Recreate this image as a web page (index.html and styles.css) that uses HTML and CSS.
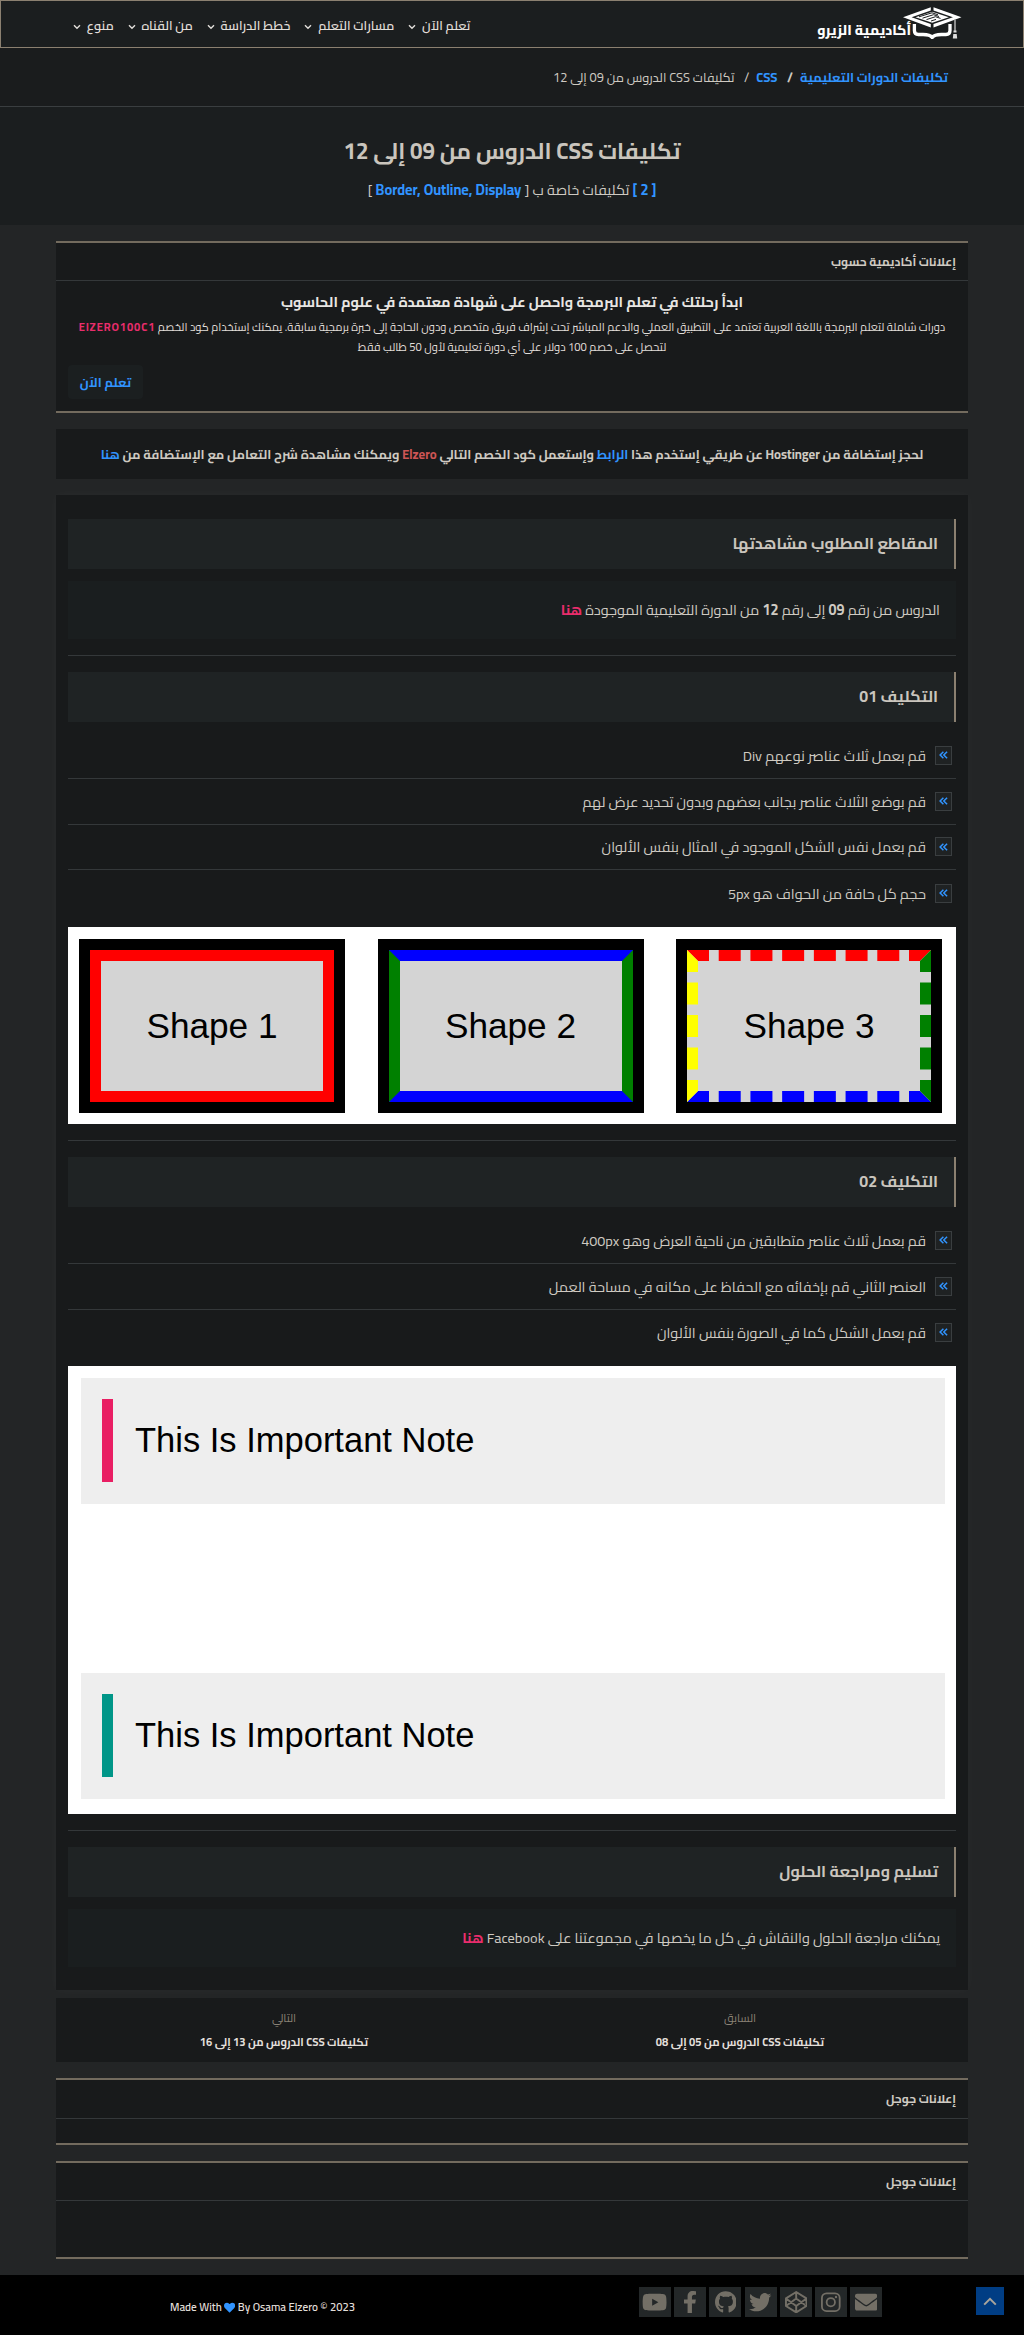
FILE: index.html
```
<!DOCTYPE html>
<html lang="ar" dir="rtl">
<head>
<meta charset="utf-8">
<title>تكليفات CSS الدروس من 09 إلى 12</title>
<link rel="stylesheet" href="styles.css">
</head>
<body>
<svg class="defs" width="0" height="0" aria-hidden="true">
  <symbol id="down" viewBox="0 0 8 6"><path d="M1 1.2l3 3 3-3" fill="none" stroke="currentColor" stroke-width="1.4"/></symbol>
  <symbol id="dbl" viewBox="0 0 9 8"><path d="M4.4.7L1.1 4l3.3 3.300M8.100.7L4.800 4l3.300 3.300" fill="none" stroke="currentColor" stroke-width="1.500"/></symbol>
</svg>
<header class="header">
  <a class="logo">
    <svg class="cap" viewBox="0 0 59 32">
      <path d="M0 10.200L27.800.300v3.200L8.600 10.200l19.200 6.900v3.400zM58.500 10.200L30.500.300v3.200l19.400 6.700-19.400 6.900v3.400z" fill="#fff"/>
      <path d="M12.500 10.200L29.200 4.700l16.700 5.500-16.700 5.600z" fill="#fff"/>
      <path d="M16 9.800l13-4 6 2M19.500 11.200l11-3.500 5.500 1.800M23.500 12.600l9-2.900 5 1.700M28 14l5-1.600" fill="none" stroke="#1b1e1f" stroke-width="1"/>
      <path d="M11.400 17v6.500q0 4 4 4h4.600q7 0 9.200 3 2.200-3 9.200-3h4.600q4 0 4-4V17" fill="none" stroke="#fff" stroke-width="3.300"/>
      <path d="M52 12.500V24" stroke="#aaa" stroke-width="1.600"/>
      <path d="M50.500 23.500h3v2h-3zM50.300 27h3.400l.5 4.500h-4.400z" fill="#ddd"/>
    </svg>
    <span class="logo-text">أكاديمية الزيرو</span>
  </a>
  <nav class="nav">
    <a>تعلم الآن<svg><use href="#down"/></svg></a>
    <a>مسارات التعلم<svg><use href="#down"/></svg></a>
    <a>خطط الدراسة<svg><use href="#down"/></svg></a>
    <a>من القناه<svg><use href="#down"/></svg></a>
    <a>منوع<svg><use href="#down"/></svg></a>
  </nav>
</header>
<div class="crumbs"><b><a>تكليفات الدورات التعليمية</a></b><b class="sep">/</b><b><a>CSS</a></b><span class="sep">/</span><span>تكليفات CSS الدروس من 09 إلى 12</span></div>
<section class="hero">
  <h1>تكليفات CSS الدروس من 09 إلى 12</h1>
  <p><b>[ 2 ]</b> تكليفات خاصة ب [ <b>Border, Outline, Display</b> ]</p>
</section>
<main class="container">
  <section class="ad">
    <div class="ad-head">إعلانات أكاديمية حسوب</div>
    <div class="ad-body">
      <h3>ابدأ رحلتك في تعلم البرمجة واحصل على شهادة معتمدة في علوم الحاسوب</h3>
      <p>دورات شاملة لتعلم البرمجة باللغة العربية تعتمد على التطبيق العملي والدعم المباشر تحت إشراف فريق متخصص ودون الحاجة إلى خبرة برمجية سابقة. يمكنك إستخدام كود الخصم <b class="code">ElZERO100C1</b><br>لتحصل على خصم 100 دولار على أي دورة تعليمية لأول 50 طالب فقط</p>
      <a class="btn">تعلم الآن</a>
    </div>
  </section>
  <section class="notice">لحجز إستضافة من Hostinger عن طريقي إستخدم هذا <a>الرابط</a> وإستعمل كود الخصم التالي <span>Elzero</span> ويمكنك مشاهدة شرح التعامل مع الإستضافة من <a>هنا</a></section>
  <article class="card">
    <h2>المقاطع المطلوب مشاهدتها</h2>
    <p class="para">الدروس من رقم <b>09</b> إلى رقم <b>12</b> من الدورة التعليمية الموجودة <a>هنا</a></p>
    <hr>
    <h2>التكليف 01</h2>
    <ul>
      <li><i><svg><use href="#dbl"/></svg></i>قم بعمل ثلاث عناصر نوعهم Div</li>
      <li><i><svg><use href="#dbl"/></svg></i>قم بوضع الثلاث عناصر بجانب بعضهم وبدون تحديد عرض لهم</li>
      <li><i><svg><use href="#dbl"/></svg></i>قم بعمل نفس الشكل الموجود في المثال بنفس الألوان</li>
      <li><i><svg><use href="#dbl"/></svg></i>حجم كل حافة من الحواف هو 5px</li>
    </ul>
    <div class="shapes">
      <div class="shape one">Shape 1</div>
      <div class="shape two">Shape 2</div>
      <div class="shape three">Shape 3</div>
    </div>
    <hr>
    <h2>التكليف 02</h2>
    <ul>
      <li><i><svg><use href="#dbl"/></svg></i>قم بعمل ثلاث عناصر متطابقين من ناحية العرض وهو 400px</li>
      <li><i><svg><use href="#dbl"/></svg></i>العنصر الثاني قم بإخفائه مع الحفاظ على مكانه في مساحة العمل</li>
      <li><i><svg><use href="#dbl"/></svg></i>قم بعمل الشكل كما في الصورة بنفس الألوان</li>
    </ul>
    <div class="notes">
      <div class="note"><span class="bar pink"></span>This Is Important Note</div>
      <div class="note"><span class="bar teal"></span>This Is Important Note</div>
    </div>
    <hr>
    <h2>تسليم ومراجعة الحلول</h2>
    <p class="para">يمكنك مراجعة الحلول والنقاش في كل ما يخصها في مجموعتنا على Facebook <a>هنا</a></p>
  </article>
  <div class="pager">
    <a><small>السابق</small><b>تكليفات CSS الدروس من 05 إلى 08</b></a>
    <a><small>التالي</small><b>تكليفات CSS الدروس من 13 إلى 16</b></a>
  </div>
  <section class="ad google short"><div class="ad-head">إعلانات جوجل</div></section>
  <section class="ad google tall"><div class="ad-head">إعلانات جوجل</div></section>
</main>
<footer class="footer">
  <div class="made">Made With <svg viewBox="0 0 512 512"><path fill="currentColor" d="M462.300 62.600C407.500 15.900 326 24.300 275.700 76.200L256 96.500l-19.700-20.300C186.100 24.300 104.500 15.900 49.700 62.600c-62.800 53.600-66.100 149.800-9.900 207.900l193.500 199.800c12.500 12.900 32.800 12.900 45.300 0l193.500-199.800c56.300-58.100 53-154.300-9.800-207.900z"/></svg> By Osama Elzero © 2023</div>
  <div class="social">
    <a><svg viewBox="0 0 576 512" width="25.200"><path d="M549.655 124.083c-6.281-23.650-24.787-42.276-48.284-48.597C458.781 64 288 64 288 64S117.220 64 74.629 75.486c-23.497 6.322-42.003 24.947-48.284 48.597-11.412 42.867-11.412 132.305-11.412 132.305s0 89.438 11.412 132.305c6.281 23.650 24.787 41.500 48.284 47.821C117.220 448 288 448 288 448s170.780 0 213.371-11.486c23.497-6.321 42.003-24.171 48.284-47.821 11.412-42.867 11.412-132.305 11.412-132.305s0-89.438-11.412-132.305zm-317.510 213.508V175.185l142.739 81.205-142.739 81.201z"/></svg></a>
    <a><svg viewBox="0 0 320 512" width="14"><path d="M279.140 288l14.220-92.660h-88.910v-60.130c0-25.350 12.420-50.060 52.240-50.060h40.420V6.260S260.430 0 225.360 0c-73.220 0-121.080 44.380-121.080 124.720v70.620H22.890V288h81.390v224h100.170V288z"/></svg></a>
    <a><svg viewBox="0 0 496 512" width="21.700"><path d="M244.800 8C106.100 8 0 113.300 0 252c0 110.900 69.800 205.800 169.500 239.200 12.800 2.300 17.300-5.600 17.300-12.100 0-6.200-.3-40.400-.3-61.400 0 0-70 15-84.700-29.800 0 0-11.400-29.100-27.800-36.600 0 0-22.900-15.700 1.600-15.400 0 0 24.900 2 38.600 25.800 21.900 38.600 58.600 27.500 72.900 20.900 2.300-16 8.800-27.100 16-33.700-55.900-6.200-112.300-14.300-112.300-110.500 0-27.500 7.600-41.300 23.600-58.900-2.600-6.500-11.100-33.300 2.600-67.900 20.900-6.500 69 27 69 27 20-5.600 41.500-8.500 62.800-8.500s42.800 2.900 62.800 8.500c0 0 48.100-33.600 69-27 13.700 34.700 5.200 61.400 2.600 67.900 16 17.700 25.800 31.500 25.800 58.900 0 96.500-58.900 104.200-114.800 110.500 9.200 7.900 17 22.900 17 46.400 0 33.700-.3 75.400-.3 83.600 0 6.500 4.600 14.400 17.300 12.100C428.200 457.800 496 362.900 496 252 496 113.300 383.500 8 244.800 8z"/></svg></a>
    <a><svg viewBox="0 0 512 512" width="22.400"><path d="M459.370 151.716c.325 4.548.325 9.097.325 13.645 0 138.720-105.583 298.558-298.558 298.558-59.452 0-114.680-17.219-161.137-47.106 8.447.974 16.568 1.299 25.340 1.299 49.055 0 94.213-16.568 130.274-44.832-46.132-.975-84.792-31.188-98.112-72.772 6.498.974 12.995 1.624 19.818 1.624 9.421 0 18.843-1.300 27.614-3.573-48.081-9.747-84.143-51.980-84.143-102.985v-1.299c13.969 7.797 30.214 12.670 47.431 13.319-28.264-18.843-46.781-51.005-46.781-87.391 0-19.492 5.197-37.360 14.294-52.954 51.655 63.675 129.300 105.258 216.365 109.807-1.624-7.797-2.599-15.918-2.599-24.040 0-57.828 46.782-104.934 104.934-104.934 30.213 0 57.502 12.670 76.670 33.137 23.715-4.548 46.456-13.320 66.599-25.340-7.798 24.366-24.366 44.833-46.132 57.827 21.117-2.273 41.584-8.122 60.426-16.243-14.292 20.791-32.161 39.308-52.628 54.253z"/></svg></a>
    <a><svg viewBox="0 0 512 512" width="22.400"><path d="M256 22L490 170v172L256 490 22 342V170zM256 22v148m0 172v148M22 170l234 172 234-172M22 342l234-172 234 172" fill="none" stroke="#736f66" stroke-width="44" stroke-linejoin="round"/></svg></a>
    <a><svg viewBox="0 0 448 512" width="19.600"><g fill="none" stroke="#736f66" stroke-width="41"><rect x="21" y="53" width="406" height="406" rx="106"/><circle cx="224" cy="256" r="95"/></g><circle cx="343" cy="137" r="27"/></svg></a>
    <a><svg viewBox="0 0 512 512" width="22.400"><path d="M502.300 190.800c3.900-3.100 9.700-.2 9.700 4.700V400c0 26.500-21.500 48-48 48H48c-26.500 0-48-21.500-48-48V195.600c0-5 5.700-7.800 9.700-4.700 22.400 17.400 52.100 39.500 154.100 113.600 21.100 15.400 56.700 47.800 92.200 47.600 35.700.3 72-32.800 92.300-47.600 102-74.100 131.600-96.300 154-113.700zM256 320c23.200.4 56.600-29.200 73.400-41.400 132.700-96.300 142.800-104.700 173.400-128.700 5.800-4.500 9.200-11.500 9.200-18.900v-19c0-26.500-21.500-48-48-48H48c-26.500 0-48 21.500-48 48v19c0 7.400 3.400 14.300 9.200 18.900 30.600 23.900 40.700 32.400 173.400 128.700 16.800 12.200 50.200 41.800 73.400 41.400z"/></svg></a>
  </div>
  <a class="top"><svg viewBox="0 0 14 9"><path d="M1.200 7.600L7 1.800l5.800 5.800" fill="none" stroke="#a9a59c" stroke-width="2"/></svg></a>
</footer>
</body>
</html>
```
FILE: styles.css
```
* { box-sizing: border-box; margin: 0; padding: 0; }
body { background: #232526; color: #cfcac2; font-family: Cairo, "Noto Sans Arabic", "DejaVu Sans", sans-serif; font-size: 14.4px; }
a { color: #3194ff; }
svg { display: block; }
.defs { position: absolute; }

.header { height: 48px; border: 1px solid #8b8070; background: #1b1e1f; display: flex; justify-content: space-between; padding: 0 61px 0 72px; }
.logo { display: flex; padding-top: 6px; }
.cap { width: 59px; height: 32px; }
.logo-text { color: #fff; font-size: 13.900px; font-weight: 800; line-height: 24px; margin: 11px -8px 0 0; white-space: nowrap; }
.nav { display: flex; gap: 14px; font-size: 12.800px; font-weight: 600; line-height: 24px; padding-top: 12px; align-items: flex-start; }
.nav a { color: #e2dfda; display: flex; align-items: center; gap: 5.800px; }
.nav svg { width: 8px; height: 6px; margin-top: 3px; }

.crumbs { height: 59px; background: #1a1c1d; border-bottom: 1px solid #3a3e40; display: flex; padding: 17px 76px 0 0; font-size: 12.800px; line-height: 24px; }
.crumbs .sep { margin: 0 7px 0 9.600px; }
.hero { height: 118px; background: #1b1e1f; text-align: center; padding-top: 23px; }
.hero h1 { font-size: 22.400px; line-height: 42px; color: #cac5bd; }
.hero p { font-size: 14.400px; line-height: 26px; margin-top: 5px; }
.hero b { color: #3194ff; }

.container { width: 912px; margin: 16px auto; }
.ad { background: #181a1b; border: solid #736b5e; border-width: 2px 0; height: 172px; }
.ad-head { height: 38px; border-bottom: 1px solid #34383a; padding: 8px 12px 0; font-size: 12px; font-weight: 700; line-height: 22px; }
.ad-body { text-align: center; padding: 7px 12px 0; }
.ad h3 { font-size: 14.400px; line-height: 27px; color: #e8e6e3; }
.ad p { font-size: 11.200px; line-height: 20px; color: #e2dfda; margin-top: 2px; }
.code { color: #e92d6c; letter-spacing: .9px; }
.btn { display: block; width: 75px; height: 34px; margin: 8px auto 0 0; border-radius: 4px; background: #1b1f20; font-size: 12.800px; font-weight: 700; line-height: 34px; }
.notice { margin-top: 16px; height: 50px; background: #181a1b; text-align: center; font-size: 12.800px; font-weight: 700; line-height: 50px; white-space: nowrap; }
.notice span { color: #cd5555; }

.card { margin-top: 16px; height: 1495px; padding: 24px 12px; background: #181a1b; box-shadow: 0 0 10px rgba(255, 255, 255, .03); }
h2 { height: 50px; background: #1f2324; border-right: 2px solid #8b8070; padding-right: 16px; font-size: 16px; line-height: 48px; color: #cac5bd; }
.para { height: 58px; margin-top: 12px; background: #1a1e1f; padding-right: 16px; line-height: 58px; }
.para a { color: #e92d6c; font-weight: 700; }
hr { border: 0; height: 1px; background: #34383a; margin: 16px 0; }
ul { list-style: none; padding-top: 11px; height: 193px; }
li { display: flex; align-items: center; gap: 9px; height: 45.800px; padding-right: 4px; border-bottom: 1px solid #34383a; }
li:last-child { border: 0; }
li i { width: 17px; height: 19px; border: 1px solid #3a3e40; background: #1f2223; display: grid; place-items: center; color: #3194ff; }
li svg { width: 9px; height: 8px; }

.shapes { direction: ltr; height: 197px; background: #fff; display: flex; gap: 54.500px; padding: 23px 22px; margin-top: 12px; }
.shape { width: 244px; height: 152px; border: 11px solid red; outline: 11px solid #000; background: #d4d4d4; color: #000; font: 35.200px/130px "Liberation Sans", Arial, sans-serif; text-align: center; }
.two { border-color: #00f green; }
.three { border: 11px dashed; border-color: red green blue yellow; }
.notes { direction: ltr; height: 448px; background: #fff; padding: 11.500px 11px 0 13px; display: grid; align-content: start; gap: 169px; margin-top: 12px; }
.note { height: 126px; background: #eee; display: flex; align-items: center; gap: 22px; padding: 0 0 1px 21px; color: #000; font: 34.500px "Liberation Sans", Arial, sans-serif; }
.bar { width: 11px; height: 83px; }
.pink { background: #e91e63; }
.teal { background: #009688; }
.card ul:nth-of-type(2) { height: 147px; }

.pager { margin-top: 8px; height: 64px; background: #181a1b; display: grid; grid-template-columns: 1fr 1fr; text-align: center; }
.pager a { display: flex; flex-direction: column; padding-top: 8px; color: #e2dfda; font-size: 11.200px; line-height: 24px; }
.pager small { font-size: 11.200px; color: #8b8376; }
.google { margin-top: 16px; }
.short { height: 67px; }
.short .ad-head { height: 39px; }
.tall { height: 98px; }

.footer { height: 60px; background: #000; display: flex; flex-direction: row-reverse; position: relative; padding-left: 170px; font-size: 11.200px; }
.made { direction: ltr; display: flex; white-space: pre; color: #e2dfda; font-weight: 600; line-height: 22px; padding-top: 21px; width: 469px; }
.made svg { width: 11.200px; height: 11.200px; color: #3194ff; margin-top: 6px; }
.social { direction: ltr; display: flex; gap: 3.200px; padding-top: 12px; margin-right: auto; }
.social a { width: 32px; height: 30px; background: #232728; display: grid; place-items: center; }
.social svg { height: 22.400px; fill: #736f66; }
.top { position: absolute; left: 976px; top: 12px; width: 28px; height: 28px; background: #003d84; display: grid; place-items: center; }
.top svg { width: 14px; height: 9px; }
```
